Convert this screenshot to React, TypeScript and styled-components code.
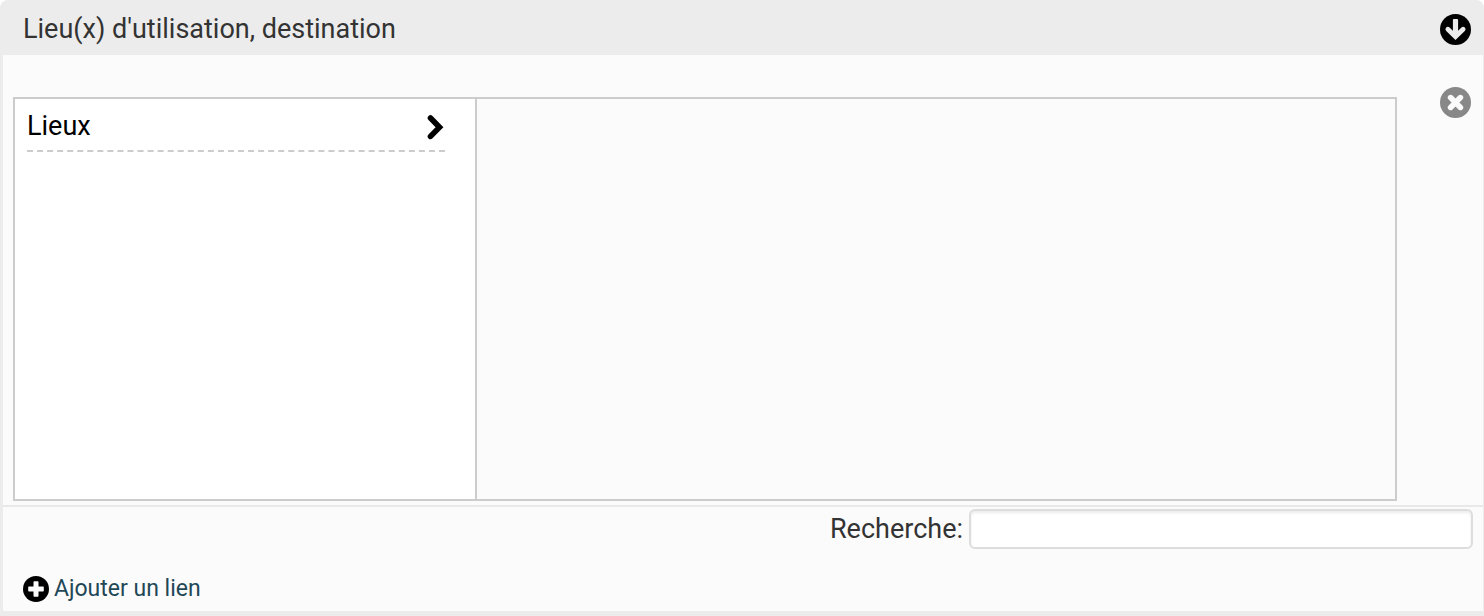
import React from "react";
import styled, { createGlobalStyle } from "styled-components";

const GlobalStyle = createGlobalStyle`
  *, *::before, *::after { box-sizing: border-box; }
  body {
    margin: 0;
    background: #fff;
    color: #333;
    font-family: Roboto, "Liberation Sans", sans-serif;
    font-size: 27px;
    line-height: 32px;
  }
  button, input { font: inherit; color: inherit; }
`;

const Bundle = styled.section`
  border-radius: 8px 8px 0 0;
  background: #ececec;
  padding: 0 1px 5px 3px;
`;

const Header = styled.header`
  display: flex;
  align-items: center;
  justify-content: space-between;
  height: 55px;
  padding: 4px 12px 0 20px;
`;

const Title = styled.h2`
  margin: 0;
  padding-bottom: 2px;
  font-size: 27px;
  font-weight: 400;
`;

const IconButton = styled.button`
  display: flex;
  flex: none;
  padding: 0;
  border: 0;
  background: none;
  cursor: pointer;
`;

const Body = styled.div`
  background: #fbfbfb;
`;

const Entry = styled.div`
  display: flex;
  align-items: flex-start;
  justify-content: space-between;
  gap: 43px;
  padding: 32px 12px 4px 10px;
  border-bottom: 2px solid #e9e9e9;
`;

const Browser = styled.div`
  display: flex;
  flex: 1;
  min-width: 0;
  height: 404px;
  margin-top: 10px;
  border: 2px solid #ccc;
`;

const Level = styled.ul`
  width: 462px;
  margin: 0;
  padding: 8px 30px 0 12px;
  border-right: 2px solid #ccc;
  background: #fff;
  list-style: none;
`;

const LevelItem = styled.li`
  padding-bottom: 7px;
  border-bottom: 2px dashed #ccc;
`;

const LevelButton = styled.button`
  display: flex;
  align-items: flex-end;
  justify-content: space-between;
  width: 100%;
  padding: 3px 0 1px;
  border: 0;
  background: none;
  color: #000;
  cursor: pointer;
`;

const SearchRow = styled.div`
  display: flex;
  align-items: center;
  justify-content: flex-end;
  gap: 6px;
  padding: 2px 10px 0;
`;

const SearchInput = styled.input`
  width: 504px;
  height: 40px;
  padding: 4px 8px;
  border: 2px solid #ddd;
  border-radius: 6px;
  background: #fff;
  box-shadow: inset 0 2px 3px rgba(0, 0, 0, 0.08);
`;

const Footer = styled.footer`
  padding: 24px 20px 6px;
`;

const AddLink = styled.a`
  display: inline-flex;
  align-items: center;
  gap: 5px;
  color: #1f4857;
  font-size: 23px;
  text-decoration: none;
  vertical-align: top;
`;

const Icon = styled.svg`
  display: block;
  flex: none;
`;

const ArrowDownIcon = () => (
  <Icon width="31" height="31" viewBox="0 0 31 31" aria-hidden="true">
    <circle cx="15.5" cy="15.5" r="15.5" fill="#000" />
    <rect x="12.9" y="5" width="5.2" height="17" rx="1" fill="#ececec" />
    <path d="M7.9 15.2l7.6 7.4 7.6-7.4" fill="none" stroke="#ececec" strokeWidth="4.8" strokeLinecap="round" />
  </Icon>
);

const RemoveIcon = () => (
  <Icon width="31" height="31" viewBox="0 0 31 31" aria-hidden="true">
    <circle cx="15.5" cy="15.5" r="15.5" fill="#888" />
    <path d="M10.6 10.6l9.8 9.8M20.4 10.6l-9.8 9.8" stroke="#fbfbfb" strokeWidth="5.6" strokeLinecap="round" />
  </Icon>
);

const ChevronIcon = () => (
  <Icon width="18" height="28" viewBox="0 0 18 28" aria-hidden="true">
    <path d="M3.5 4l9 9.2-9 9.2" fill="none" stroke="#000" strokeWidth="5.6" strokeLinecap="round" />
  </Icon>
);

const PlusIcon = () => (
  <Icon width="26" height="26" viewBox="0 0 26 26" aria-hidden="true">
    <circle cx="13" cy="13" r="13" fill="#000" />
    <path
      d="M11.2 5.2h3.6q.7 0 .7.7v4.6h4.6q.7 0 .7.7v3.6q0 .7-.7.7h-4.6v4.6q0 .7-.7.7h-3.6q-.7 0-.7-.7v-4.6H5.9q-.7 0-.7-.7v-3.6q0-.7.7-.7h4.6V5.9q0-.7.7-.7z"
      fill="#fbfbfb"
    />
  </Icon>
);

export default function App() {
  return (
    <>
      <GlobalStyle />
      <Bundle>
        <Header>
          <Title>Lieu(x) d'utilisation, destination</Title>
          <IconButton type="button" aria-label="Replier">
            <ArrowDownIcon />
          </IconButton>
        </Header>
        <Body>
          <Entry>
            <Browser>
              <Level>
                <LevelItem>
                  <LevelButton type="button">
                    Lieux
                    <ChevronIcon />
                  </LevelButton>
                </LevelItem>
              </Level>
            </Browser>
            <IconButton type="button" aria-label="Supprimer">
              <RemoveIcon />
            </IconButton>
          </Entry>
          <SearchRow>
            <label htmlFor="search">Recherche:</label>
            <SearchInput id="search" type="text" />
          </SearchRow>
          <Footer>
            <AddLink href="#">
              <PlusIcon />
              Ajouter un lien
            </AddLink>
          </Footer>
        </Body>
      </Bundle>
    </>
  );
}
